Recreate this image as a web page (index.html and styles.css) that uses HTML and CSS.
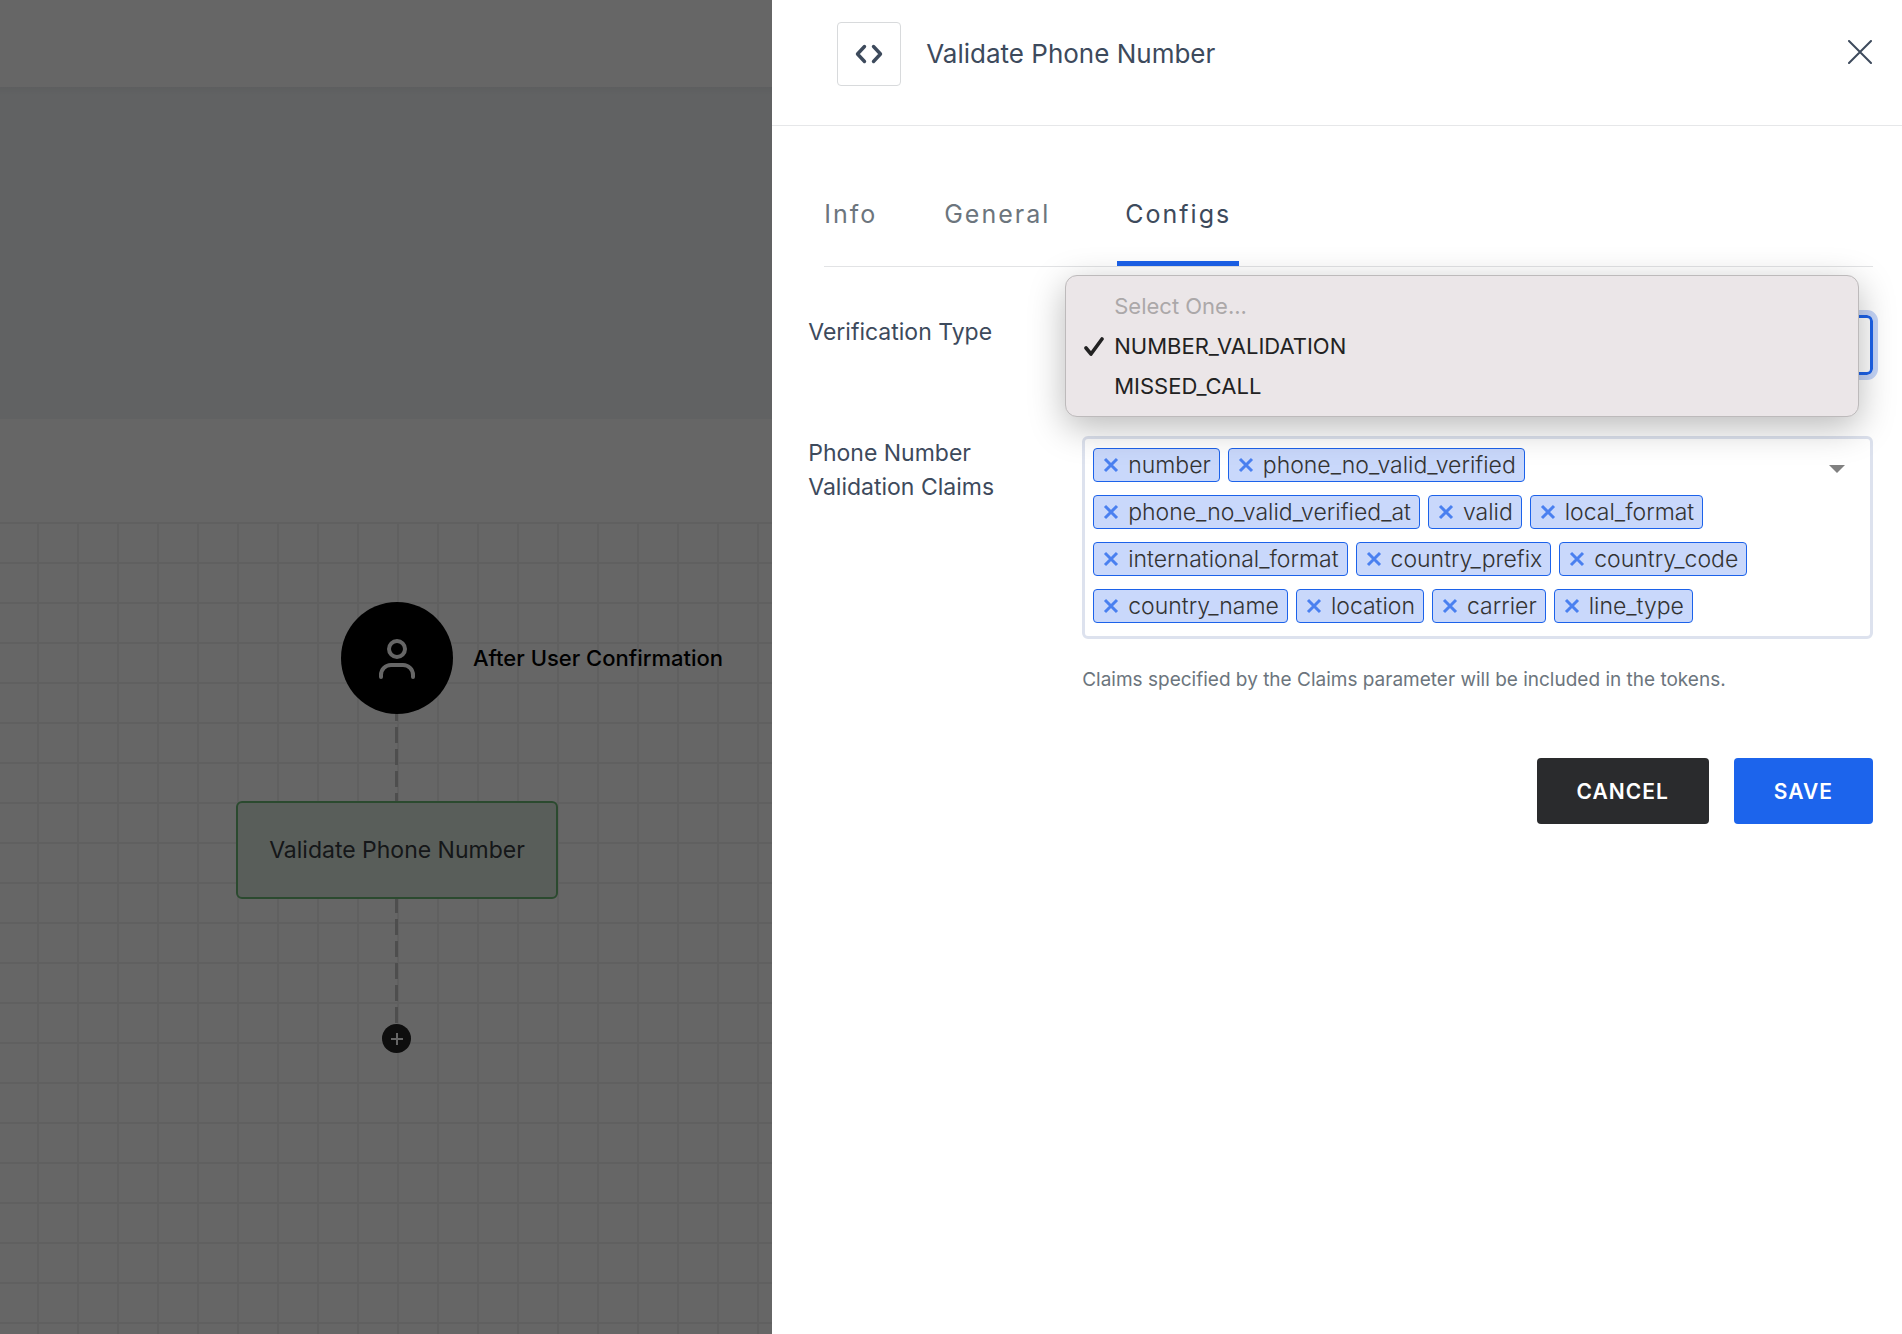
FILE: index.html
```html
<!DOCTYPE html>
<html lang="en">
<head>
<meta charset="utf-8">
<meta name="viewport" content="width=device-width, initial-scale=1">
<title>Validate Phone Number</title>
<link rel="stylesheet" href="styles.css">
</head>
<body>
<div class="page">
  <header class="navbar"></header>
  <section class="banner"></section>
  <section class="toolbar"></section>
  <main class="canvas">
    <div class="edge edge-first"></div>
    <div class="edge edge-second"></div>
    <div class="trigger">
      <span class="trigger-icon">
        <svg width="48" height="48" viewBox="0 0 48 48" fill="none" stroke="#fff" stroke-width="4" stroke-linecap="round">
          <circle cx="24" cy="15" r="8"/>
          <path d="M8 43v-2a10 10 0 0 1 10-10h12a10 10 0 0 1 10 10v2"/>
        </svg>
      </span>
      <span class="trigger-label">After User Confirmation</span>
    </div>
    <div class="node">Validate Phone Number</div>
    <button class="add-node" type="button" aria-label="Add step">
      <svg width="14" height="14" viewBox="0 0 14 14" stroke="#fff" stroke-width="2"><path d="M7 1v12M1 7h12"/></svg>
    </button>
  </main>
</div>
<div class="backdrop"></div>

<aside class="drawer" role="dialog" aria-labelledby="drawer-title">
  <header class="drawer-header">
    <span class="drawer-icon">
      <svg width="28" height="20" viewBox="0 0 28 20" fill="none" stroke="#3d4a5c" stroke-width="3.4" stroke-linecap="round" stroke-linejoin="round">
        <path d="M9.5 2.5l-7 7.5 7 7.5M18.5 2.5l7 7.5-7 7.5"/>
      </svg>
    </span>
    <h1 class="drawer-title" id="drawer-title">Validate Phone Number</h1>
    <button class="close" type="button" aria-label="Close">
      <svg width="24" height="24" viewBox="0 0 24 24" stroke="#3d4a5c" stroke-width="2" stroke-linecap="round"><path d="M1 1l22 22M23 1L1 23"/></svg>
    </button>
  </header>

  <nav class="tabs">
    <a class="tab" href="#info">Info</a>
    <a class="tab" href="#general">General</a>
    <a class="tab tab-active" href="#configs">Configs</a>
  </nav>

  <form class="form">
    <div class="field">
      <label class="field-label" for="verification-type">Verification Type</label>
      <div class="field-control">
        <select class="select" id="verification-type">
          <option disabled>Select One...</option>
          <option selected>NUMBER_VALIDATION</option>
          <option>MISSED_CALL</option>
        </select>
        <ul class="menu" role="listbox">
          <li class="menu-item menu-item-disabled" role="option">Select One...</li>
          <li class="menu-item" role="option" aria-selected="true">
            <svg class="check" width="20" height="20" viewBox="0 0 20 20" fill="none" stroke="#222" stroke-width="3.6" stroke-linecap="round" stroke-linejoin="round"><path d="M2 11l5 6L18 2"/></svg>NUMBER_VALIDATION</li>
          <li class="menu-item" role="option">MISSED_CALL</li>
        </ul>
      </div>
    </div>

    <div class="field">
      <span class="field-label" id="claims-label">Phone Number Validation Claims</span>
      <div class="field-control">
        <div class="multi" role="group" aria-labelledby="claims-label">
          <ul class="tags">
            <li class="tag"><button class="tag-remove" type="button" aria-label="Remove number"><svg width="16" height="16" viewBox="0 0 16 16"><path d="M2 2l12 12M14 2L2 14"/></svg></button>number</li>
            <li class="tag"><button class="tag-remove" type="button" aria-label="Remove phone_no_valid_verified"><svg width="16" height="16" viewBox="0 0 16 16"><path d="M2 2l12 12M14 2L2 14"/></svg></button>phone_no_valid_verified</li>
            <li class="tag"><button class="tag-remove" type="button" aria-label="Remove phone_no_valid_verified_at"><svg width="16" height="16" viewBox="0 0 16 16"><path d="M2 2l12 12M14 2L2 14"/></svg></button>phone_no_valid_verified_at</li>
            <li class="tag"><button class="tag-remove" type="button" aria-label="Remove valid"><svg width="16" height="16" viewBox="0 0 16 16"><path d="M2 2l12 12M14 2L2 14"/></svg></button>valid</li>
            <li class="tag"><button class="tag-remove" type="button" aria-label="Remove local_format"><svg width="16" height="16" viewBox="0 0 16 16"><path d="M2 2l12 12M14 2L2 14"/></svg></button>local_format</li>
            <li class="tag"><button class="tag-remove" type="button" aria-label="Remove international_format"><svg width="16" height="16" viewBox="0 0 16 16"><path d="M2 2l12 12M14 2L2 14"/></svg></button>international_format</li>
            <li class="tag"><button class="tag-remove" type="button" aria-label="Remove country_prefix"><svg width="16" height="16" viewBox="0 0 16 16"><path d="M2 2l12 12M14 2L2 14"/></svg></button>country_prefix</li>
            <li class="tag"><button class="tag-remove" type="button" aria-label="Remove country_code"><svg width="16" height="16" viewBox="0 0 16 16"><path d="M2 2l12 12M14 2L2 14"/></svg></button>country_code</li>
            <li class="tag"><button class="tag-remove" type="button" aria-label="Remove country_name"><svg width="16" height="16" viewBox="0 0 16 16"><path d="M2 2l12 12M14 2L2 14"/></svg></button>country_name</li>
            <li class="tag"><button class="tag-remove" type="button" aria-label="Remove location"><svg width="16" height="16" viewBox="0 0 16 16"><path d="M2 2l12 12M14 2L2 14"/></svg></button>location</li>
            <li class="tag"><button class="tag-remove" type="button" aria-label="Remove carrier"><svg width="16" height="16" viewBox="0 0 16 16"><path d="M2 2l12 12M14 2L2 14"/></svg></button>carrier</li>
            <li class="tag"><button class="tag-remove" type="button" aria-label="Remove line_type"><svg width="16" height="16" viewBox="0 0 16 16"><path d="M2 2l12 12M14 2L2 14"/></svg></button>line_type</li>
          </ul>
          <svg class="caret" width="16" height="8" viewBox="0 0 16 8"><path d="M0 0h16L8 8z" fill="#808080"/></svg>
        </div>
        <p class="help">Claims specified by the Claims parameter will be included in the tokens.</p>
      </div>
    </div>

    <div class="actions">
      <button class="button button-dark" type="button">CANCEL</button>
      <button class="button button-primary" type="submit">SAVE</button>
    </div>
  </form>
</aside>
</body>
</html>
```

FILE: styles.css
```css
* {
  box-sizing: border-box;
}

body {
  margin: 0;
  font-family: Inter, "Liberation Sans", sans-serif;
  font-size: 23px;
  color: #3d4a5c;
}

button {
  padding: 0;
  border: 0;
  background: none;
  font: inherit;
  color: inherit;
}

ul {
  margin: 0;
  padding: 0;
  list-style: none;
}

svg {
  display: block;
}

/* Workflow page */
.page {
  display: flex;
  flex-direction: column;
  height: 100vh;
  overflow: hidden;
  background: #fff;
}

.navbar {
  height: 87px;
  flex: none;
}

.banner {
  height: 332px;
  flex: none;
  background: linear-gradient(#e9ecee, #f2f5f8 8px);
}

.toolbar {
  height: 103px;
  flex: none;
}

.canvas {
  position: relative;
  flex: 1;
  background-image:
    linear-gradient(#f1f1f1 2px, transparent 2px),
    linear-gradient(90deg, #f1f1f1 2px, transparent 2px);
  background-size: 40px 40px;
  background-position: 0 0, 37px 0;
}

.trigger {
  position: absolute;
  left: 341px;
  top: 80px;
  display: flex;
  align-items: center;
  gap: 20px;
  white-space: nowrap;
}

.trigger-icon {
  display: flex;
  align-items: center;
  justify-content: center;
  width: 112px;
  height: 112px;
  border-radius: 50%;
  background: #000;
}

.trigger-label {
  font-size: 22px;
  font-weight: 500;
  color: #000;
}

.node {
  position: absolute;
  left: 236px;
  top: 279px;
  width: 322px;
  height: 98px;
  display: flex;
  align-items: center;
  justify-content: center;
  border: 2px solid #6cb877;
  border-radius: 6px;
  background: #dfeae2;
  color: #363b40;
  white-space: nowrap;
}

.edge {
  position: absolute;
  left: 395px;
  width: 3px;
  background: repeating-linear-gradient(#c4c4c4 0 16px, transparent 16px 22px);
}

.edge-first {
  top: 183px;
  height: 97px;
}

.edge-second {
  top: 375px;
  height: 128px;
}

.add-node {
  position: absolute;
  left: 382px;
  top: 502px;
  width: 29px;
  height: 29px;
  display: flex;
  align-items: center;
  justify-content: center;
  border-radius: 50%;
  background: #232323;
}

.backdrop {
  position: fixed;
  inset: 0;
  background: rgba(0, 0, 0, 0.6);
}

/* Drawer */
.drawer {
  position: fixed;
  top: 0;
  right: 0;
  bottom: 0;
  width: 59.4%;
  overflow: auto;
  background: #fff;
}

.drawer-header {
  display: flex;
  align-items: center;
  gap: 25px;
  padding: 22px 30px 39px 65px;
  border-bottom: 1px solid #e6e7e9;
}

.drawer-icon {
  display: flex;
  align-items: center;
  justify-content: center;
  width: 64px;
  height: 64px;
  border: 1px solid #d8dadc;
  border-radius: 4px;
}

.drawer-title {
  flex: 1;
  margin: 0;
  font-size: 26px;
  font-weight: 400;
  line-height: 32px;
}

.close {
  align-self: flex-start;
  margin-top: 18px;
}

.tabs {
  display: flex;
  gap: 59px;
  margin: 62px 29px 0 52px;
  border-bottom: 1px solid #e2e3e5;
}

.tab {
  padding: 9px 8px 30px;
  border-bottom: 5px solid transparent;
  font-size: 25px;
  line-height: 34px;
  letter-spacing: 2px;
  color: #6c757d;
  text-decoration: none;
}

.tab:first-child {
  padding-left: 0;
  padding-right: 0;
}

.tab-active {
  border-color: #1c62ea;
  color: #3d4a5c;
}

.form {
  padding: 48px 29px 0 36px;
}

.field {
  display: grid;
  grid-template-columns: 274px 1fr;
  margin-bottom: 61px;
}

.field-label {
  max-width: 230px;
  line-height: 34px;
}

.field-control {
  position: relative;
  min-width: 0;
}

.select {
  display: block;
  width: 100%;
  height: 60px;
  padding: 0 16px;
  border: 3px solid #1c62ea;
  border-radius: 6px;
  outline: 5px solid #c5d5f8;
  background: #fff;
  appearance: none;
  font: inherit;
  color: inherit;
}

.menu {
  position: absolute;
  z-index: 1;
  top: -40px;
  left: -17px;
  right: 14px;
  padding: 10px 0;
  border: 1px solid #bdbabb;
  border-radius: 12px;
  background: #ebe6e8;
  box-shadow: 0 10px 36px rgba(0, 0, 0, 0.28);
}

.menu-item {
  position: relative;
  padding-left: 48px;
  font-size: 22px;
  line-height: 40px;
  color: #222;
}

.menu-item-disabled {
  color: #aba8a9;
}

.check {
  position: absolute;
  left: 18px;
  top: 11px;
}

.multi {
  display: flex;
  justify-content: space-between;
  padding: 9px 25px 13px 8px;
  border: 3px solid #dde2ee;
  border-radius: 6px;
}

.tags {
  display: flex;
  flex-wrap: wrap;
  gap: 13px 8px;
  max-width: 680px;
}

.tag {
  display: flex;
  align-items: center;
  gap: 9px;
  height: 34px;
  padding: 0 8px 0 9px;
  border: 1px solid #1c62ea;
  border-radius: 4px;
  background: #c9d8fb;
  font-weight: 300;
  color: #333;
}

.tag-remove path {
  stroke: #4a80f0;
  stroke-width: 3;
}

.caret {
  margin-top: 17px;
}

.help {
  margin: 29px 0 0;
  font-size: 19px;
  line-height: 24px;
  color: #6c757d;
}

.actions {
  display: flex;
  justify-content: flex-end;
  gap: 25px;
  padding-top: 5px;
}

.button {
  height: 66px;
  padding: 0 40px;
  border-radius: 4px;
  font-size: 21px;
  font-weight: 600;
  letter-spacing: 1px;
  color: #fff;
}

.button-dark {
  background: #2a2b2d;
}

.button-primary {
  background: #1c64ec;
}
```
